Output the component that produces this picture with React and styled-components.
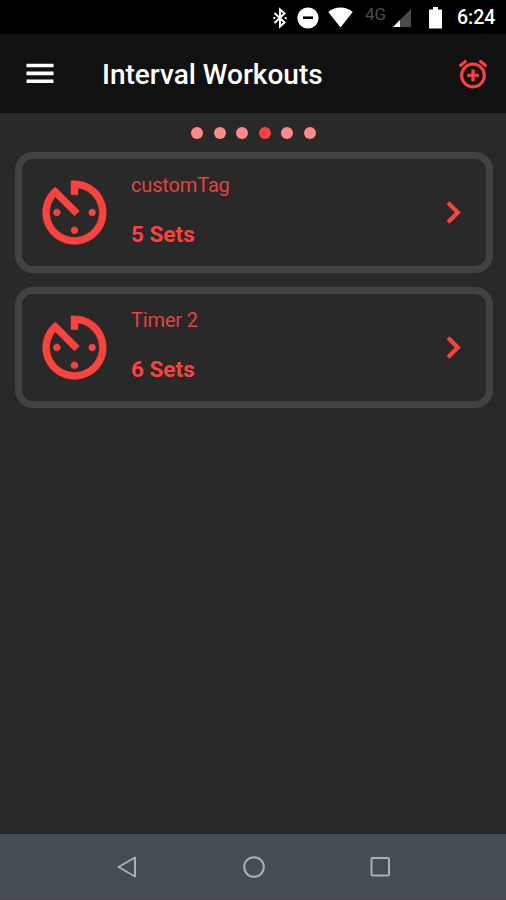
import React from 'react';
import styled, { createGlobalStyle } from 'styled-components';

const GlobalStyle = createGlobalStyle`
    * {
        box-sizing: border-box;
    }
    body {
        margin: 0;
        background: #292929;
        font-family: Roboto, sans-serif;
    }
    svg {
        display: block;
        flex-shrink: 0;
    }
`
const Screen = styled.div`
    display: flex;
    flex-direction: column;
    width: 506px;
    height: 900px;
    overflow: hidden;
    background: #292929;
`
const StatusBar = styled.div`
    display: flex;
    align-items: center;
    height: 34px;
    padding: 1px 0 0 272px;
    background: #000;
    color: #fff;
`
const StatusIcons = styled.div`
    display: flex;
    align-items: center;
    gap: 9px;
`
const Network = styled.span`
    width: 28px;
    margin-left: 11px;
    padding-bottom: 8px;
    color: #4b4b4b;
    font-size: 17px;
    line-height: 18px;
`
const Signal = styled.div`
    display: flex;
    align-items: center;
    gap: 18px;
`
const Clock = styled.span`
    margin-left: 15px;
    font-size: 19.5px;
    font-weight: 500;
    line-height: 34px;
    white-space: nowrap;
`
const Header = styled.header`
    display: flex;
    align-items: center;
    height: 79px;
    padding: 0 16px 0 26px;
    background: #111;
`
const Title = styled.h1`
    flex: 1;
    margin: 2px 0 0 48px;
    color: #fff;
    font-size: 28px;
    font-weight: 500;
    line-height: 34px;
    white-space: nowrap;
`
const Dots = styled.div`
    display: flex;
    align-items: center;
    justify-content: center;
    gap: 10.5px;
    height: 39px;
    padding-left: 1px;
`
const Dot = styled.span`
    width: 12px;
    height: 12px;
    border-radius: 50%;
    background: ${props => props.$active ? '#fb423e' : '#fc8a88'};
`
const List = styled.main`
    display: flex;
    flex: 1;
    flex-direction: column;
    gap: 14px;
    padding: 0 13.5px 0 14.5px;
`
const Card = styled.div`
    display: flex;
    align-items: center;
    height: 121px;
    padding: 0 11px 0 10.5px;
    border: 7px solid #424242;
    border-radius: 18px;
`
const Info = styled.div`
    display: flex;
    flex: 1;
    flex-direction: column;
    gap: 22px;
    margin: -6px 0 0 14px;
`
const Tag = styled.span`
    color: #e5413f;
    font-size: 20px;
    letter-spacing: -0.15px;
    line-height: 26px;
    white-space: nowrap;
`
const Sets = styled.span`
    color: #fb423e;
    font-size: 22.5px;
    font-weight: 700;
    line-height: 28px;
    white-space: nowrap;
`
const NavBar = styled.nav`
    display: flex;
    align-items: center;
    justify-content: center;
    gap: 102.5px;
    height: 66px;
    padding: 1px 0 0 1.5px;
    border-bottom: 1px solid #474857;
    background: #454d52;
`

const timers = [
    { name: 'customTag', sets: 5 },
    { name: 'Timer 2', sets: 6 },
]

function BluetoothIcon() {
    return (
        <svg width="16" height="22" viewBox="0 0 16 22" fill="none" stroke="#fff" strokeWidth="2">
            <path d="M2.5 6 12.500 15.500 8 19.500V2.500l4.500 4L2.500 16" />
            <path d="M2.300 9.900v2.200M13.700 9.900v2.200" />
        </svg>
    )
}

function DisturbIcon() {
    return (
        <svg width="22" height="22" viewBox="0 0 22 22">
            <circle cx="11" cy="11" r="10.6" fill="#fff" />
            <path d="M6 10.700h10" stroke="#000" strokeWidth="2.6" />
        </svg>
    )
}

function WifiIcon() {
    return (
        <svg width="26" height="22" viewBox="0 0 26 22" fill="#fff">
            <path d="M12.500 20.500.300 5C3.500 2 7.800.500 12.500.500S21.500 2 24.700 5z" />
        </svg>
    )
}

function SignalIcon() {
    return (
        <svg width="18" height="20" viewBox="0 0 18 20">
            <path d="M0 19 18 1v18z" fill="#4b4b4b" />
            <path d="M0 19 7 12v7z" fill="#fff" />
        </svg>
    )
}

function BatteryIcon() {
    return (
        <svg width="13" height="22" viewBox="0 0 13 22" fill="#fff">
            <path d="M4 0h5v2.500h4V21.500H0V2.500h4z" />
        </svg>
    )
}

function MenuIcon() {
    return (
        <svg width="28" height="22" viewBox="0 0 28 22" fill="#fff">
            <path d="M.5 .700h27v3.600H.5zM.5 8.600h27v3.600H.5zM.5 16.500h27v3.600H.5z" />
        </svg>
    )
}

function AlarmAddIcon() {
    return (
        <svg width="34" height="34" viewBox="0 0 24 24" fill="#fb423e" stroke="#fb423e" strokeWidth=".3">
            <path d="M7.88 3.39 6.6 1.86 2 5.71l1.29 1.53zM22 5.72l-4.6-3.86-1.29 1.53 4.6 3.86zM12 4c-4.97 0-9 4.03-9 9s4.02 9 9 9a9 9 0 0 0 0-18m0 16c-3.87 0-7-3.13-7-7s3.13-7 7-7 7 3.13 7 7-3.13 7-7 7m1-11h-2v3H8v2h3v3h2v-3h3v-2h-3z" />
        </svg>
    )
}

function TimerIcon() {
    return (
        <svg width="85" height="85" viewBox="0 0 24 24" fill="#fb423e">
            <path d="M11 17c0 .55.45 1 1 1s1-.45 1-1-.45-1-1-1-1 .45-1 1zm0-14v4h2V5.08c3.39.49 6 3.39 6 6.92 0 3.87-3.13 7-7 7s-7-3.13-7-7c0-1.68.59-3.22 1.58-4.42L12 13l1.41-1.41-6.8-6.8v.02C4.42 6.45 3 9.05 3 12c0 4.97 4.02 9 9 9 4.97 0 9-4.03 9-9s-4.03-9-9-9h-1zm7 9c0-.55-.45-1-1-1s-1 .45-1 1 .45 1 1 1 1-.45 1-1zM6 12c0 .55.45 1 1 1s1-.45 1-1-.45-1-1-1-1 .45-1 1z" stroke="#fb423e" strokeWidth=".1" />
        </svg>
    )
}

function ChevronIcon() {
    return (
        <svg width="44" height="44" viewBox="0 0 24 24" fill="none" stroke="#fb423e" strokeWidth="2.3">
            <path d="M9.3 6.4 14.6 11.700 9.3 17" />
        </svg>
    )
}

export default function App() {
    return (
        <>
            <GlobalStyle />
            <Screen>
                <StatusBar>
                    <StatusIcons>
                        <BluetoothIcon />
                        <DisturbIcon />
                        <WifiIcon />
                    </StatusIcons>
                    <Network>4G</Network>
                    <Signal>
                        <SignalIcon />
                        <BatteryIcon />
                    </Signal>
                    <Clock>6:24</Clock>
                </StatusBar>
                <Header>
                    <MenuIcon />
                    <Title>Interval Workouts</Title>
                    <AlarmAddIcon />
                </Header>
                <Dots>
                    {[0, 1, 2, 3, 4, 5].map(i => <Dot key={i} $active={i === 3} />)}
                </Dots>
                <List>
                    {timers.map(timer => (
                        <Card key={timer.name}>
                            <TimerIcon />
                            <Info>
                                <Tag>{timer.name}</Tag>
                                <Sets>{timer.sets} Sets</Sets>
                            </Info>
                            <ChevronIcon />
                        </Card>
                    ))}
                </List>
                <NavBar>
                    <svg width="24" height="24" viewBox="0 0 24 24" fill="none" stroke="#a9b0b1" strokeWidth="2" strokeLinejoin="round">
                        <path d="M20 2.500v19L3.500 12z" />
                    </svg>
                    <svg width="24" height="24" viewBox="0 0 24 24" fill="none" stroke="#a9b0b1" strokeWidth="2">
                        <circle cx="12" cy="12" r="9.8" />
                    </svg>
                    <svg width="24" height="24" viewBox="0 0 24 24" fill="none" stroke="#a9b0b1" strokeWidth="2">
                        <rect x="3.5" y="3" width="17.5" height="17.5" rx="1" />
                    </svg>
                </NavBar>
            </Screen>
        </>
    )
}
